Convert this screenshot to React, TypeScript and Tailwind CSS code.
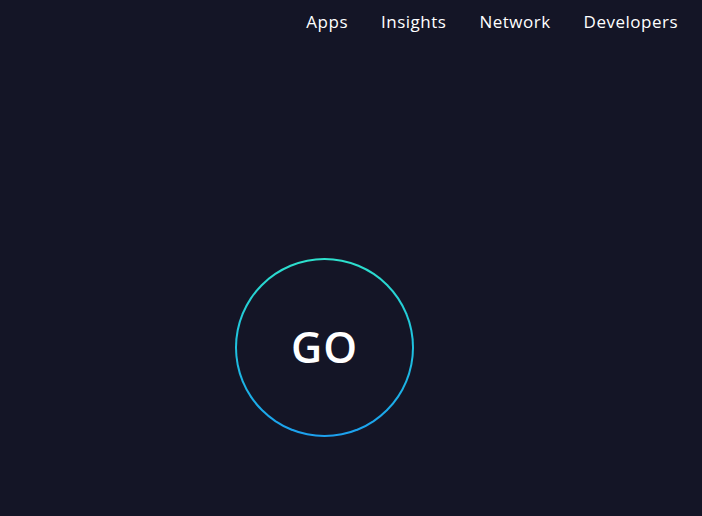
import React from 'react';

const links = ['Apps', 'Insights', 'Network', 'Developers'];

const App: React.FC = () => {
  return (
    <div className="min-h-screen h-[516px] bg-[#141526] text-white font-['Open_Sans',sans-serif] overflow-hidden">
      {/* Top nav */}
      <nav className="h-[44px] flex items-center justify-end gap-[33px] pr-[24px]">
        {links.map((l) => (
          <a key={l} className="text-[17px] font-medium tracking-[0.5px] text-white cursor-pointer">
            {l}
          </a>
        ))}
      </nav>

      {/* Start button */}
      <div className="pt-[214px] pl-[235px]">
        <div className="w-[179px] h-[179px] rounded-full p-[2px] bg-gradient-to-b from-[#2ee0cc] to-[#1da0ee]">
          <button className="w-full h-full rounded-full bg-[#141526] flex items-center justify-center text-[43px] font-semibold tracking-[1px] text-white">
            GO
          </button>
        </div>
      </div>
    </div>
  );
};

export default App;
